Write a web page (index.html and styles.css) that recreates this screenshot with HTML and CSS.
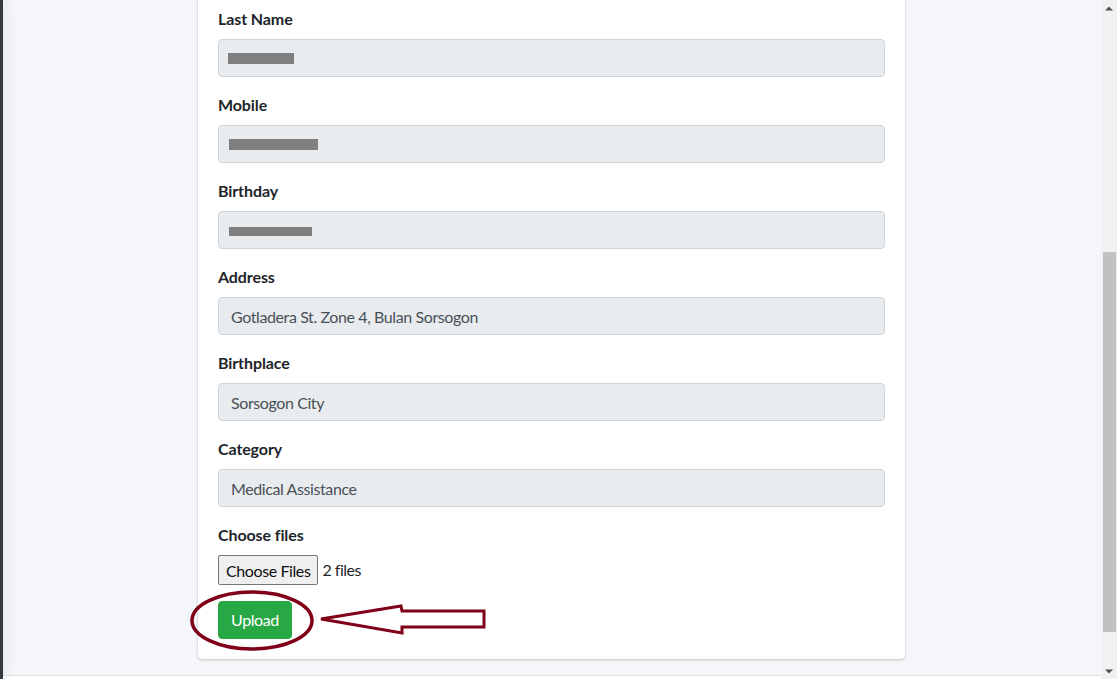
FILE: index.html
```html
<!DOCTYPE html>
<html lang="en">
<head>
<meta charset="utf-8">
<title>Upload Requirements</title>
<link rel="stylesheet" href="styles.css">
</head>
<body>
<div class="app">
  <aside class="sidebar"></aside>
  <div class="main">
    <div class="content">
      <div class="card">
        <div class="card-body">
          <form class="form">
            <div class="form-group">
              <label>Last Name</label>
              <div class="field"><input class="form-control" type="text" disabled><span class="redact redact-last"></span></div>
            </div>
            <div class="form-group">
              <label>Mobile</label>
              <div class="field"><input class="form-control" type="text" disabled><span class="redact redact-mobile"></span></div>
            </div>
            <div class="form-group">
              <label>Birthday</label>
              <div class="field"><input class="form-control" type="text" disabled><span class="redact redact-birthday"></span></div>
            </div>
            <div class="form-group">
              <label>Address</label>
              <input class="form-control" type="text" value="Gotladera St. Zone 4, Bulan Sorsogon" disabled>
            </div>
            <div class="form-group">
              <label>Birthplace</label>
              <input class="form-control" type="text" value="Sorsogon City" disabled>
            </div>
            <div class="form-group">
              <label>Category</label>
              <input class="form-control" type="text" value="Medical Assistance" disabled>
            </div>
            <div class="form-group">
              <label>Choose files</label>
              <div class="file-row">
                <button type="button" class="file-btn">Choose Files</button>
                <span class="file-count">2 files</span>
              </div>
            </div>
            <div class="submit-row">
              <button type="button" class="btn btn-success">Upload</button>
              <svg class="annotation" viewBox="178 581 320 80" width="320" height="80" aria-hidden="true">
                <ellipse cx="252" cy="620.5" rx="60" ry="28.5" fill="none" stroke="#7f0018" stroke-width="3.5"/>
                <polygon points="321,619 401,606 402,611 484,611 484,627 402,627 402,633" fill="none" stroke="#7f0018" stroke-width="3"/>
              </svg>
            </div>
          </form>
        </div>
      </div>
    </div>
    <footer class="footer"></footer>
  </div>
  <div class="scrollbar">
    <div class="sb-btn">
      <svg width="8" height="5" viewBox="0 0 8 5"><polygon points="0,4.5 4,0.5 8,4.5" fill="#505050"/></svg>
    </div>
    <div class="sb-track"><div class="sb-thumb"></div></div>
    <div class="sb-btn sb-btn-down">
      <svg width="8" height="5" viewBox="0 0 8 5"><polygon points="0,0.5 8,0.5 4,4.5" fill="#505050"/></svg>
    </div>
  </div>
</div>
</body>
</html>
```

FILE: styles.css
```css
html, body {
  margin: 0;
  height: 100%;
}

body {
  font-family: Lato, "Liberation Sans", sans-serif;
  font-size: 16px;
  line-height: 1.5;
  color: #212529;
  background: #f4f6f9;
  overflow: hidden;
}

.app {
  display: flex;
  height: 100vh;
}

.sidebar {
  flex: none;
  width: 3px;
  background: #343a40;
  box-shadow: 0 0 14px rgba(0, 0, 0, 0.22);
  position: relative;
  z-index: 2;
}

.main {
  flex: 1;
  min-width: 0;
  display: flex;
  flex-direction: column;
}

.content {
  flex: 1;
  min-height: 0;
  overflow: hidden;
  display: flex;
  flex-direction: column;
  justify-content: flex-end;
  align-items: center;
  padding-bottom: 16px;
  padding-right: 1px;
}

.card {
  flex: none;
  width: 707px;
  background: #fff;
  border-radius: 4px;
  box-shadow: 0 0 1px rgba(0, 0, 0, 0.125), 0 1px 3px rgba(0, 0, 0, 0.2);
}

.card-body {
  padding: 20px;
}

.form-group {
  margin-bottom: 16px;
}

.form-group label {
  display: inline-block;
  margin-bottom: 8px;
  font-weight: 700;
  letter-spacing: -0.1px;
}

.field {
  position: relative;
}

.form-control {
  display: block;
  width: 100%;
  box-sizing: border-box;
  height: 38px;
  margin: 0;
  padding: 6px 12px;
  font-family: inherit;
  font-size: 16px;
  line-height: 1.5;
  letter-spacing: -0.4px;
  color: #495057;
  background: #e9ecef;
  border: 1px solid #ced4da;
  border-radius: 4px;
}

.redact {
  position: absolute;
  left: 10px;
  background: #7f7f7f;
}

.redact-last { top: 14px; width: 66px; height: 11px; }
.redact-mobile { top: 14px; left: 11px; width: 89px; height: 11px; }
.redact-birthday { top: 16px; left: 11px; width: 83px; height: 9px; }

.file-row {
  display: flex;
  align-items: center;
  gap: 4px;
}

.file-btn {
  height: 30px;
  margin: 0;
  padding: 0 7px;
  font-family: inherit;
  font-size: 16px;
  letter-spacing: -0.4px;
  color: #101010;
  background: #efefef;
  border: 1px solid #767676;
  border-radius: 2px;
}

.file-count {
  color: #212529;
  letter-spacing: -0.5px;
}

.submit-row {
  position: relative;
}

.btn {
  display: inline-block;
  padding: 6px 12px;
  font-family: inherit;
  font-size: 16px;
  line-height: 1.5;
  letter-spacing: -0.4px;
  border-radius: 4px;
  cursor: pointer;
}

.btn-success {
  color: #fff;
  background: #28a745;
  border: 1px solid #28a745;
}

.annotation {
  position: absolute;
  left: -40px;
  top: -20px;
  pointer-events: none;
}

.footer {
  flex: none;
  height: 3px;
  background: #fff;
  border-top: 1px solid #dee2e6;
}

.scrollbar {
  flex: none;
  width: 16px;
  background: #f1f1f1;
  display: flex;
  flex-direction: column;
}

.sb-btn {
  flex: none;
  height: 16px;
  display: flex;
  align-items: center;
  justify-content: center;
}

.sb-btn svg {
  display: block;
}

.sb-track {
  flex: 1;
}

.sb-thumb {
  margin-top: 236px;
  margin-left: 2px;
  width: 13px;
  height: 380px;
  background: #c1c1c1;
}
```
